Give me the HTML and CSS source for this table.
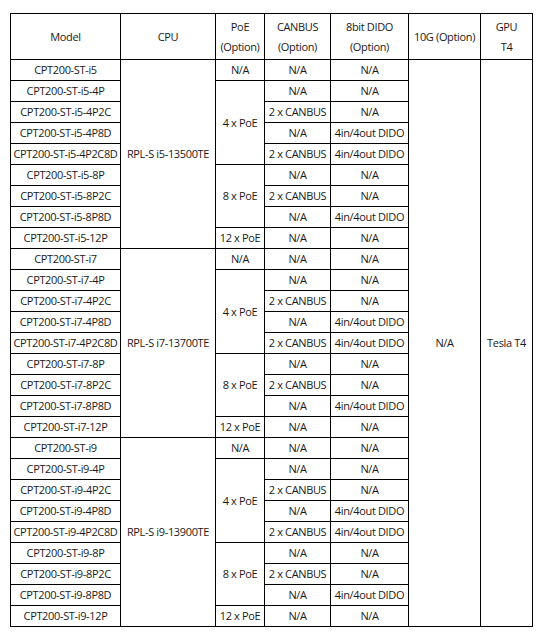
FILE: index.html
```html
<!DOCTYPE html>
<html>
<head>
<meta charset="utf-8">
<link rel="stylesheet" href="styles.css">
</head>
<body>
<table class="spec">
<colgroup>
<col class="c-model"><col class="c-cpu"><col class="c-poe"><col class="c-can"><col class="c-dido"><col class="c-10g"><col class="c-gpu">
</colgroup>
<thead>
<tr class="head">
<th>Model</th><th>CPU</th><th>PoE<br>(Option)</th><th>CANBUS<br>(Option)</th><th>8bit DIDO<br>(Option)</th><th>10G (Option)</th><th>GPU<br>T4</th>
</tr>
</thead>
<tbody>
<tr><td>CPT200-ST-i5</td><td rowspan="9">RPL-S i5-13500TE</td><td>N/A</td><td>N/A</td><td>N/A</td><td rowspan="27">N/A</td><td rowspan="27">Tesla T4</td></tr>
<tr><td>CPT200-ST-i5-4P</td><td rowspan="4">4 x PoE</td><td>N/A</td><td>N/A</td></tr>
<tr><td>CPT200-ST-i5-4P2C</td><td>2 x CANBUS</td><td>N/A</td></tr>
<tr><td>CPT200-ST-i5-4P8D</td><td>N/A</td><td>4in/4out DIDO</td></tr>
<tr><td>CPT200-ST-i5-4P2C8D</td><td>2 x CANBUS</td><td>4in/4out DIDO</td></tr>
<tr><td>CPT200-ST-i5-8P</td><td rowspan="3">8 x PoE</td><td>N/A</td><td>N/A</td></tr>
<tr><td>CPT200-ST-i5-8P2C</td><td>2 x CANBUS</td><td>N/A</td></tr>
<tr><td>CPT200-ST-i5-8P8D</td><td>N/A</td><td>4in/4out DIDO</td></tr>
<tr><td>CPT200-ST-i5-12P</td><td>12 x PoE</td><td>N/A</td><td>N/A</td></tr>

<tr><td>CPT200-ST-i7</td><td rowspan="9">RPL-S i7-13700TE</td><td>N/A</td><td>N/A</td><td>N/A</td></tr>
<tr><td>CPT200-ST-i7-4P</td><td rowspan="4">4 x PoE</td><td>N/A</td><td>N/A</td></tr>
<tr><td>CPT200-ST-i7-4P2C</td><td>2 x CANBUS</td><td>N/A</td></tr>
<tr><td>CPT200-ST-i7-4P8D</td><td>N/A</td><td>4in/4out DIDO</td></tr>
<tr><td>CPT200-ST-i7-4P2C8D</td><td>2 x CANBUS</td><td>4in/4out DIDO</td></tr>
<tr><td>CPT200-ST-i7-8P</td><td rowspan="3">8 x PoE</td><td>N/A</td><td>N/A</td></tr>
<tr><td>CPT200-ST-i7-8P2C</td><td>2 x CANBUS</td><td>N/A</td></tr>
<tr><td>CPT200-ST-i7-8P8D</td><td>N/A</td><td>4in/4out DIDO</td></tr>
<tr><td>CPT200-ST-i7-12P</td><td>12 x PoE</td><td>N/A</td><td>N/A</td></tr>

<tr><td>CPT200-ST-i9</td><td rowspan="9">RPL-S i9-13900TE</td><td>N/A</td><td>N/A</td><td>N/A</td></tr>
<tr><td>CPT200-ST-i9-4P</td><td rowspan="4">4 x PoE</td><td>N/A</td><td>N/A</td></tr>
<tr><td>CPT200-ST-i9-4P2C</td><td>2 x CANBUS</td><td>N/A</td></tr>
<tr><td>CPT200-ST-i9-4P8D</td><td>N/A</td><td>4in/4out DIDO</td></tr>
<tr><td>CPT200-ST-i9-4P2C8D</td><td>2 x CANBUS</td><td>4in/4out DIDO</td></tr>
<tr><td>CPT200-ST-i9-8P</td><td rowspan="3">8 x PoE</td><td>N/A</td><td>N/A</td></tr>
<tr><td>CPT200-ST-i9-8P2C</td><td>2 x CANBUS</td><td>N/A</td></tr>
<tr><td>CPT200-ST-i9-8P8D</td><td>N/A</td><td>4in/4out DIDO</td></tr>
<tr><td>CPT200-ST-i9-12P</td><td>12 x PoE</td><td>N/A</td><td>N/A</td></tr>
</tbody>
</table>
</body>
</html>
```
FILE: styles.css
```css
html, body {
  margin: 0;
  padding: 0;
  background: #ffffff;
}
body {
  padding: 13px 0 0 10px;
  font-family: "Open Sans", "Noto Sans", sans-serif;
  font-size: 11px;
  letter-spacing: -0.35px;
  color: #1a1a1a;
}
.spec {
  border-collapse: collapse;
  table-layout: fixed;
  width: 522px;
}
.c-model { width: 110px; }
.c-cpu { width: 95px; }
.c-poe { width: 49px; }
.c-can { width: 66px; }
.c-dido { width: 78px; }
.c-10g { width: 72px; }
.c-gpu { width: 52px; }
.spec th, .spec td {
  border: 1px solid #000;
  padding: 0;
  text-align: center;
  vertical-align: middle;
  white-space: nowrap;
  font-weight: normal;
}
.spec td {
  height: 20px;
  line-height: 20px;
}
.head th {
  height: 45px;
  line-height: 20px;
}
```
